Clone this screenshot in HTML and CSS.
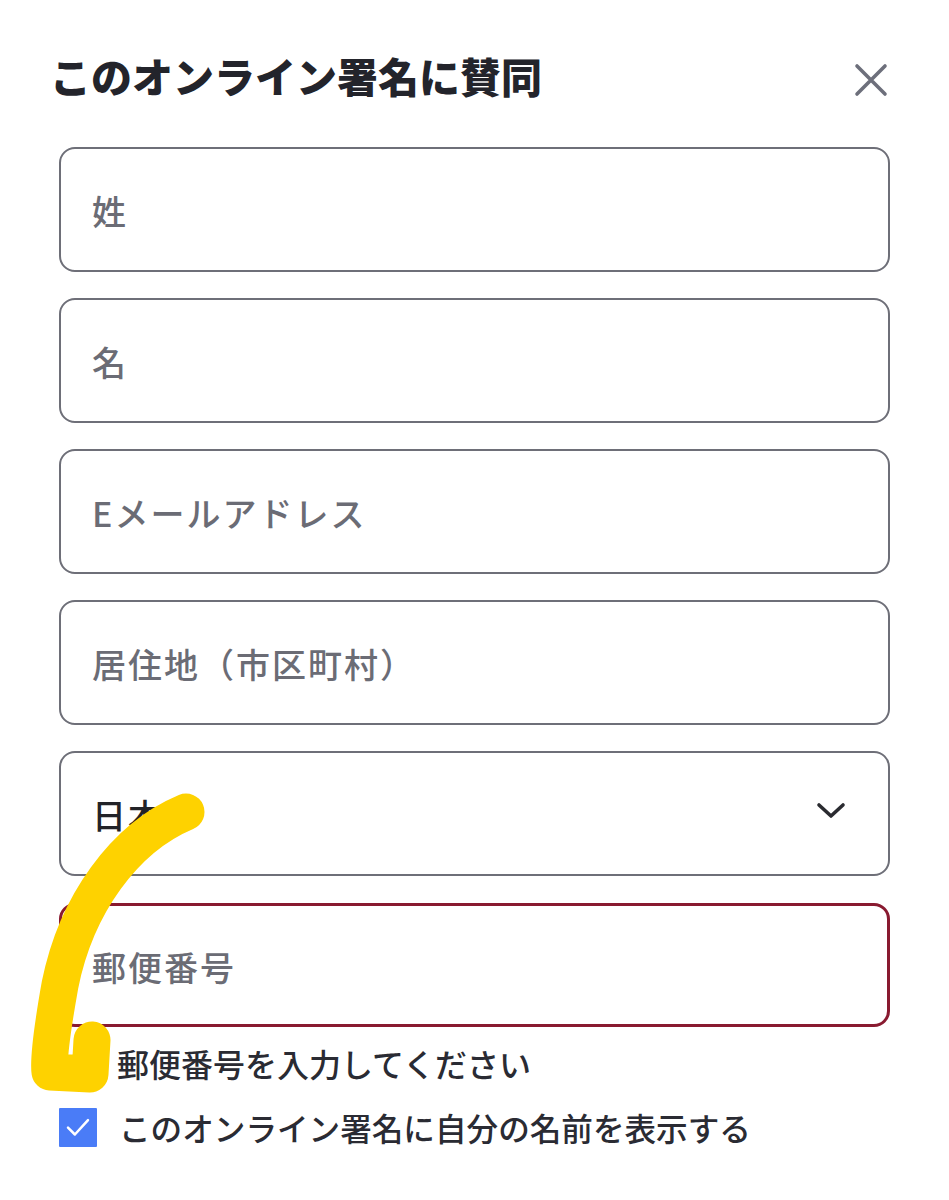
FILE: index.html
```html
<!DOCTYPE html>
<html lang="ja">
<head>
    <meta charset="UTF-8">
    <meta name="viewport" content="width=device-width, initial-scale=1.0">
    <title>このオンライン署名に賛同</title>
    <link rel="stylesheet" href="styles.css">
</head>
<body>
    <div class="sheet">
        <div class="head">
            <h1>このオンライン署名に賛同</h1>
            <button class="close" aria-label="閉じる">
                <svg width="34" height="34" viewBox="0 0 34 34"><path d="M3 3 L31 31 M31 3 L3 31" stroke="#6d6f7b" stroke-width="3.6" stroke-linecap="round" fill="none"/></svg>
            </button>
        </div>

        <form class="fields">
            <input type="text" class="field" placeholder="姓">
            <input type="text" class="field" placeholder="名">
            <input type="email" class="field" placeholder="Eメールアドレス">
            <input type="text" class="field" placeholder="居住地（市区町村）">

            <div class="select-wrap">
                <select class="field select">
                    <option>日本</option>
                </select>
                <svg class="chevron" width="30" height="18" viewBox="0 0 30 18"><path d="M3 3 L15 14 L27 3" stroke="#2a2b30" stroke-width="3.6" stroke-linecap="round" stroke-linejoin="round" fill="none"/></svg>
            </div>

            <input type="text" class="field field-error" placeholder="郵便番号">
            <div class="error-msg">郵便番号を入力してください</div>

            <label class="check-row">
                <span class="checkbox">
                    <svg width="30" height="30" viewBox="0 0 24 24"><path d="M4 12.5 L9.5 18 L20 6.5" stroke="#fff" stroke-width="2" stroke-linecap="round" stroke-linejoin="round" fill="none"/></svg>
                </span>
                <span class="check-label">このオンライン署名に自分の名前を表示する</span>
            </label>
        </form>

        <!-- hand-drawn highlight over the form -->
        <svg class="marker" width="949" height="1200" viewBox="0 0 949 1200">
            <path d="M186 812 C 124 838 76 905 60 985 C 52 1030 48 1060 50 1072 L 90 1074 L 92 1040" stroke="#fed200" stroke-width="37" stroke-linecap="round" stroke-linejoin="round" fill="none"/>
        </svg>
    </div>
</body>
</html>
```

FILE: styles.css
```css
* {
    box-sizing: border-box;
}
body {
    margin: 0;
    background: #fff;
    font-family: "Noto Sans CJK JP", "Noto Sans", sans-serif;
    color: #25262d;
}
.sheet {
    position: relative;
    width: 949px;
    min-height: 1200px;
    overflow: hidden;
}
.head {
    display: flex;
    justify-content: space-between;
    align-items: center;
    padding: 52px 61px 0 50px;
}
h1 {
    margin: 0;
    font-size: 41px;
    line-height: 47px;
    font-weight: 900;
    color: #23242b;
}
.close {
    border: none;
    background: none;
    padding: 0;
    margin-top: 8px;
    display: flex;
    cursor: pointer;
}
.fields {
    display: flex;
    flex-direction: column;
    margin: 48px 59px 0 59px;
}
.field {
    display: block;
    width: 100%;
    height: 125px;
    margin: 0 0 26px;
    padding: 2px 31px 0;
    border: 2px solid #6e6f78;
    border-radius: 16px;
    background: #fff;
    font-family: "Noto Sans CJK JP", "Noto Sans", sans-serif;
    font-size: 34px;
    letter-spacing: 2px;
    font-weight: 500;
    color: #222328;
    outline: none;
}
.field::placeholder {
    color: #6b6c75;
    opacity: 1;
}
.select-wrap {
    position: relative;
}
.select {
    appearance: none;
    -webkit-appearance: none;
    color: #222328;
    margin-bottom: 27px;
}
.chevron {
    position: absolute;
    right: 44px;
    top: 51px;
    pointer-events: none;
}
.field-error {
    border: 3px solid #891a30;
    height: 124px;
    padding-left: 30px;
    margin-bottom: 16px;
}
.error-msg {
    margin-left: 58px;
    font-size: 32px;
    line-height: 40px;
    font-weight: 500;
    color: #2a2b33;
}
.check-row {
    display: flex;
    align-items: center;
    gap: 22px;
    margin-top: 24px;
    cursor: pointer;
}
.checkbox {
    display: flex;
    align-items: center;
    justify-content: center;
    width: 38px;
    height: 39px;
    background: #4a7cf7;
    border-radius: 1px;
}
.check-label {
    font-size: 31.6px;
    line-height: 40px;
    font-weight: 500;
    color: #2a2b33;
}
.marker {
    position: absolute;
    left: 0;
    top: 0;
    pointer-events: none;
}
```
